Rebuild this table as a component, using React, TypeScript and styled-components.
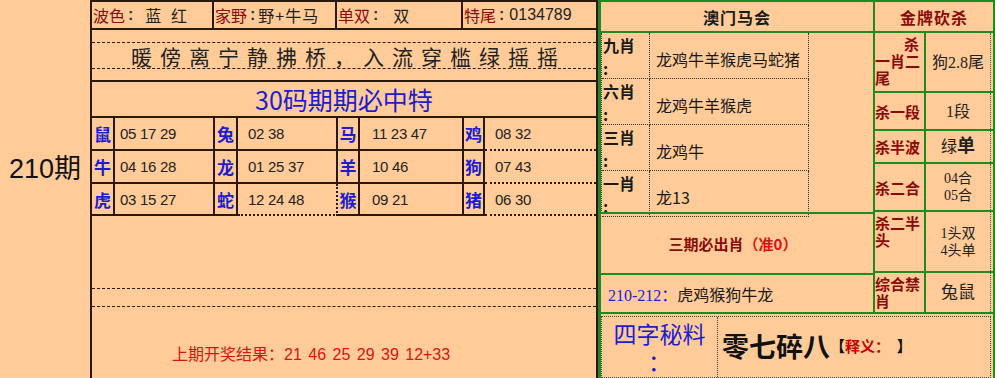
import React from 'react';
import styled, { createGlobalStyle } from 'styled-components';

const DARK = '#2a1808';
const GREEN = '#1f8a1f';
const PEACH = '#ffcc99';
const MAROON = '#8b0a0a';
const BLUE = '#1c1cd0';
const RED = '#dd1111';
const CJK = '"Noto Sans CJK SC", sans-serif';
const SANS = '"Liberation Sans", "Noto Sans CJK SC", sans-serif';
const SERIF = '"Liberation Serif", "Noto Sans CJK SC", serif';

const GlobalStyle = createGlobalStyle`
  html, body { margin: 0; padding: 0; background: ${PEACH}; }
  body { font-family: ${CJK}; color: #222; }
  * { box-sizing: border-box; }
`;

const Page = styled.div`
  display: flex;
  width: 995px;
  height: 378px;
  overflow: hidden;
  background: ${PEACH};
`;

const PeriodCol = styled.div`
  width: 90px;
  display: flex;
  align-items: center;
  justify-content: center;
  padding-bottom: 46px;
  font-family: ${SANS};
  font-size: 27px;
  color: #111;
`;

/* ---------- middle panel ---------- */
const MainPanel = styled.div`
  width: 508px;
  height: 378px;
  border-left: 2px solid ${DARK};
  border-right: 2px solid ${DARK};
  display: flex;
  flex-direction: column;
`;

const InfoRow = styled.div`
  display: grid;
  grid-template-columns: 122px 123px 126px 1fr;
  height: 30px;
  border-top: 2px solid ${DARK};
  border-bottom: 2px solid ${DARK};
`;

const InfoCell = styled.div<{ $last?: boolean }>`
  display: flex;
  align-items: center;
  padding-left: 1px;
  border-right: ${(p) => (p.$last ? 'none' : `2px solid ${DARK}`)};
  font-size: 16px;
  white-space: nowrap;
`;

const InfoLabel = styled.span`
  color: ${MAROON};
`;

const InfoColon = styled.span`
  margin: 0 3px 0 3px;
  font-family: ${SANS};
  font-weight: 700;
  color: #333;
`;

const InfoValue = styled.span<{ $gap: number; $latin?: boolean; $spread?: boolean }>`
  margin-left: ${(p) => p.$gap}px;
  color: #222;
  letter-spacing: ${(p) => (p.$latin ? '0' : p.$spread ? '3px' : '1px')};
  font-family: ${(p) => (p.$latin ? SANS : CJK)};
`;

const PoemRow = styled.div`
  height: 52px;
  padding-top: 12px;
  border-bottom: 2px solid ${DARK};
`;

const PoemBand = styled.div`
  height: 27px;
  border-top: 1px dashed ${DARK};
  border-bottom: 1px dashed ${DARK};
  display: flex;
  align-items: center;
  justify-content: center;
  padding-left: 9px;
  font-size: 21px;
  letter-spacing: 8px;
  color: #222;
`;

const TitleRow = styled.div`
  height: 36px;
  border-bottom: 2px solid ${DARK};
  display: flex;
  align-items: center;
  justify-content: center;
  font-size: 25px;
  color: ${BLUE};
`;

const ZodiacGrid = styled.div`
  display: grid;
  grid-template-columns: 23px 100px 23px 100px 22px 104px 21px 1fr;
  grid-template-rows: 33px 33px 32px;
`;

const ZodiacChar = styled.div`
  display: flex;
  align-items: center;
  justify-content: center;
  border-right: 2px solid ${DARK};
  border-bottom: 2px solid ${DARK};
  color: ${BLUE};
  font-weight: 700;
  font-size: 17px;
`;

const ZodiacNums = styled.div<{ $pad: number; $dotted?: boolean; $last?: boolean }>`
  display: flex;
  align-items: center;
  padding-left: ${(p) => p.$pad}px;
  border-right: ${(p) => (p.$last ? 'none' : `2px ${p.$dotted ? 'dotted' : 'solid'} ${DARK}`)};
  border-bottom: 2px ${(p) => (p.$dotted ? 'dotted' : 'solid')} ${DARK};
  font-family: ${SANS};
  font-size: 15px;
  letter-spacing: -0.3px;
  color: #222;
`;

const BottomArea = styled.div`
  flex: 1;
  display: flex;
  flex-direction: column;
  padding-top: 72px;
`;

const DashBand = styled.div`
  height: 19px;
  border-top: 1px dashed ${DARK};
  border-bottom: 1px dashed ${DARK};
`;

const ResultLine = styled.div`
  padding-top: 36px;
  padding-left: 80px;
  color: ${RED};
  font-size: 16px;
  line-height: 20px;
  white-space: nowrap;
`;

const ResultNums = styled.span`
  font-family: ${SANS};
  word-spacing: 2px;
`;

/* ---------- right panel ---------- */
const RightPanel = styled.div`
  flex: 1;
  height: 378px;
  border-left: 3px solid ${GREEN};
  border-top: 2px solid ${GREEN};
  border-right: 2px solid ${GREEN};
  display: flex;
  flex-direction: column;
`;

const RightTop = styled.div`
  display: flex;
  height: 312px;
  border-bottom: 2px solid ${GREEN};
`;

const MacauCol = styled.div`
  width: 272px;
  display: flex;
  flex-direction: column;
`;

const HeaderCell = styled.div<{ $color: string }>`
  height: 31px;
  flex: none;
  border-bottom: 2px solid ${GREEN};
  display: flex;
  align-items: center;
  justify-content: center;
  font-size: 16px;
  font-weight: 700;
  color: ${(p) => p.$color};
  letter-spacing: 1px;
`;

const ShawBlock = styled.div`
  width: 208px;
  height: 178px;
  display: grid;
  grid-template-columns: 48px 1fr;
  grid-template-rows: repeat(4, 1fr);
  border-left: 1px dotted #333;
`;

const ShawLabel = styled.div`
  border-right: 1px dotted #333;
  border-bottom: 1px dotted #333;
  padding: 2px 0 0 1px;
  font-size: 16px;
  font-weight: 700;
  line-height: 20px;
  color: #1a1a1a;
  display: flex;
  flex-direction: column;
  gap: 3px;
`;

const ShawValue = styled.div`
  border-right: 1px dotted #333;
  border-bottom: 1px dotted #333;
  display: flex;
  align-items: center;
  padding: 6px 0 0 6px;
  font-size: 16px;
  color: #1a1a1a;
  white-space: nowrap;
`;

const SureRow = styled.div`
  height: 63px;
  border-top: 2px solid ${GREEN};
  border-bottom: 2px solid ${GREEN};
  margin-top: 1px;
  display: flex;
  align-items: center;
  justify-content: center;
  padding-right: 8px;
  font-size: 15px;
  font-weight: 700;
  color: ${MAROON};
`;

const SureHint = styled.span`
  color: ${RED};
  font-family: ${CJK};
`;

const RangeRow = styled.div`
  flex: 1;
  display: flex;
  align-items: center;
  padding-left: 7px;
  font-size: 16px;
  color: #1a1a1a;
`;

const RangeNum = styled.span`
  color: ${BLUE};
  font-family: ${SERIF};
`;

const GoldCol = styled.div`
  flex: 1;
  border-left: 2px solid ${GREEN};
  display: flex;
  flex-direction: column;
`;

const GoldRow = styled.div<{ $h: number; $last?: boolean }>`
  height: ${(p) => p.$h}px;
  flex: none;
  display: grid;
  grid-template-columns: 51px 1fr;
  border-bottom: ${(p) => (p.$last ? 'none' : `2px solid ${GREEN}`)};
`;

const GoldLabel = styled.div<{ $top?: boolean }>`
  border-right: 2px solid ${GREEN};
  display: flex;
  flex-direction: column;
  justify-content: ${(p) => (p.$top ? 'flex-start' : 'center')};
  padding-top: ${(p) => (p.$top ? '2px' : '0')};
  font-size: 15px;
  font-weight: 700;
  line-height: 17px;
  color: ${MAROON};
  white-space: nowrap;
`;

const LabelLine = styled.span<{ $right?: boolean }>`
  text-align: ${(p) => (p.$right ? 'right' : 'left')};
  padding-right: ${(p) => (p.$right ? '5px' : '0')};
`;

const GoldValue = styled.div<{ $size?: number }>`
  border-right: 1px dotted #555;
  margin-right: 2px;
  display: flex;
  flex-direction: column;
  align-items: center;
  justify-content: center;
  font-family: ${SERIF};
  font-size: ${(p) => p.$size ?? 16}px;
  line-height: 17px;
  color: #222;
`;

const BoldChar = styled.span`
  font-weight: 700;
  font-size: 18px;
`;

const SecretRow = styled.div`
  flex: 1;
  padding: 2px 2px 0 0;
  display: flex;
`;

const SecretBox = styled.div`
  flex: 1;
  border: 1px dotted #444;
  display: grid;
  grid-template-columns: 116px 1fr;
`;

const SecretLabel = styled.div`
  border-right: 1px dotted #444;
  display: flex;
  flex-direction: column;
  align-items: center;
  padding-top: 2px;
  font-size: 23px;
  line-height: 28px;
  color: ${BLUE};
`;

const SecretContent = styled.div`
  display: flex;
  align-items: center;
  padding-left: 4px;
  padding-bottom: 4px;
  white-space: nowrap;
`;

const SecretWord = styled.span`
  font-size: 27px;
  font-weight: 700;
  color: #111;
`;

const Bracket = styled.span`
  font-size: 15px;
  font-weight: 700;
  color: #111;
`;

const BracketRed = styled.span`
  font-size: 15px;
  font-weight: 700;
  color: #c80000;
`;

const zodiacRows: [string, string][][] = [
  [['鼠', '05 17 29'], ['兔', '02 38'], ['马', '11 23 47'], ['鸡', '08 32']],
  [['牛', '04 16 28'], ['龙', '01 25 37'], ['羊', '10 46'], ['狗', '07 43']],
  [['虎', '03 15 27'], ['蛇', '12 24 48'], ['猴', '09 21'], ['猪', '06 30']],
];
const pads = [5, 10, 12, 10];

const shaws = [
  ['九肖', '龙鸡牛羊猴虎马蛇猪'],
  ['六肖', '龙鸡牛羊猴虎'],
  ['三肖', '龙鸡牛'],
  ['一肖', '龙13'],
];

export default function App() {
  return (
    <>
      <GlobalStyle />
      <Page>
        <PeriodCol>210期</PeriodCol>
        <MainPanel>
          <InfoRow>
            <InfoCell>
              <InfoLabel>波色</InfoLabel>
              <InfoColon>:</InfoColon>
              <InfoValue $gap={9} $spread>蓝 红</InfoValue>
            </InfoCell>
            <InfoCell>
              <InfoLabel>家野</InfoLabel>
              <InfoColon>:</InfoColon>
              <InfoValue $gap={0}>野+牛马</InfoValue>
            </InfoCell>
            <InfoCell>
              <InfoLabel>单双</InfoLabel>
              <InfoColon>:</InfoColon>
              <InfoValue $gap={12}>双</InfoValue>
            </InfoCell>
            <InfoCell $last>
              <InfoLabel>特尾</InfoLabel>
              <InfoColon>:</InfoColon>
              <InfoValue $gap={2} $latin>0134789</InfoValue>
            </InfoCell>
          </InfoRow>
          <PoemRow>
            <PoemBand>暖傍离宁静拂桥，入流穿槛绿摇摇</PoemBand>
          </PoemRow>
          <TitleRow>30码期期必中特</TitleRow>
          <ZodiacGrid>
            {zodiacRows.map((row, r) =>
              row.map(([z, nums], c) => (
                <React.Fragment key={`${r}-${c}`}>
                  <ZodiacChar>{z}</ZodiacChar>
                  <ZodiacNums $pad={pads[c]} $dotted={c === 3 || (r === 2 && c === 1)} $last={c === 3}>
                    {nums}
                  </ZodiacNums>
                </React.Fragment>
              ))
            )}
          </ZodiacGrid>
          <BottomArea>
            <DashBand />
            <ResultLine>
              上期开奖结果：<ResultNums>21 46 25 29 39 12+33</ResultNums>
            </ResultLine>
          </BottomArea>
        </MainPanel>
        <RightPanel>
          <RightTop>
            <MacauCol>
              <HeaderCell $color="#1a1a1a">澳门马会</HeaderCell>
              <ShawBlock>
                {shaws.map(([label, value]) => (
                  <React.Fragment key={label}>
                    <ShawLabel>
                      <span>{label}</span>
                      <span>:</span>
                    </ShawLabel>
                    <ShawValue>{value}</ShawValue>
                  </React.Fragment>
                ))}
              </ShawBlock>
              <SureRow>
                三期必出肖<SureHint>（准0）</SureHint>
              </SureRow>
              <RangeRow>
                <RangeNum>210-212：</RangeNum>虎鸡猴狗牛龙
              </RangeRow>
            </MacauCol>
            <GoldCol>
              <HeaderCell $color={MAROON}>金牌砍杀</HeaderCell>
              <GoldRow $h={60}>
                <GoldLabel $top>
                  <LabelLine $right>杀</LabelLine>
                  <LabelLine>一肖二</LabelLine>
                  <LabelLine>尾</LabelLine>
                </GoldLabel>
                <GoldValue>狗2.8尾</GoldValue>
              </GoldRow>
              <GoldRow $h={38}>
                <GoldLabel>杀一段</GoldLabel>
                <GoldValue>1段</GoldValue>
              </GoldRow>
              <GoldRow $h={33}>
                <GoldLabel>杀半波</GoldLabel>
                <GoldValue>
                  <span>
                    绿<BoldChar>单</BoldChar>
                  </span>
                </GoldValue>
              </GoldRow>
              <GoldRow $h={48}>
                <GoldLabel>杀二合</GoldLabel>
                <GoldValue $size={14}>
                  <span>04合</span>
                  <span>05合</span>
                </GoldValue>
              </GoldRow>
              <GoldRow $h={61}>
                <GoldLabel $top>
                  <LabelLine>杀二半</LabelLine>
                  <LabelLine>头</LabelLine>
                </GoldLabel>
                <GoldValue $size={14}>
                  <span>1头双</span>
                  <span>4头单</span>
                </GoldValue>
              </GoldRow>
              <GoldRow $h={39} $last>
                <GoldLabel $top>
                  <LabelLine>综合禁</LabelLine>
                  <LabelLine>肖</LabelLine>
                </GoldLabel>
                <GoldValue $size={17}>兔鼠</GoldValue>
              </GoldRow>
            </GoldCol>
          </RightTop>
          <SecretRow>
            <SecretBox>
              <SecretLabel>
                <span>四字秘料</span>
                <span>：</span>
              </SecretLabel>
              <SecretContent>
                <SecretWord>零七碎八</SecretWord>
                <Bracket>【</Bracket>
                <BracketRed>释义：</BracketRed>
                <Bracket>&nbsp;&nbsp;】</Bracket>
              </SecretContent>
            </SecretBox>
          </SecretRow>
        </RightPanel>
      </Page>
    </>
  );
}
